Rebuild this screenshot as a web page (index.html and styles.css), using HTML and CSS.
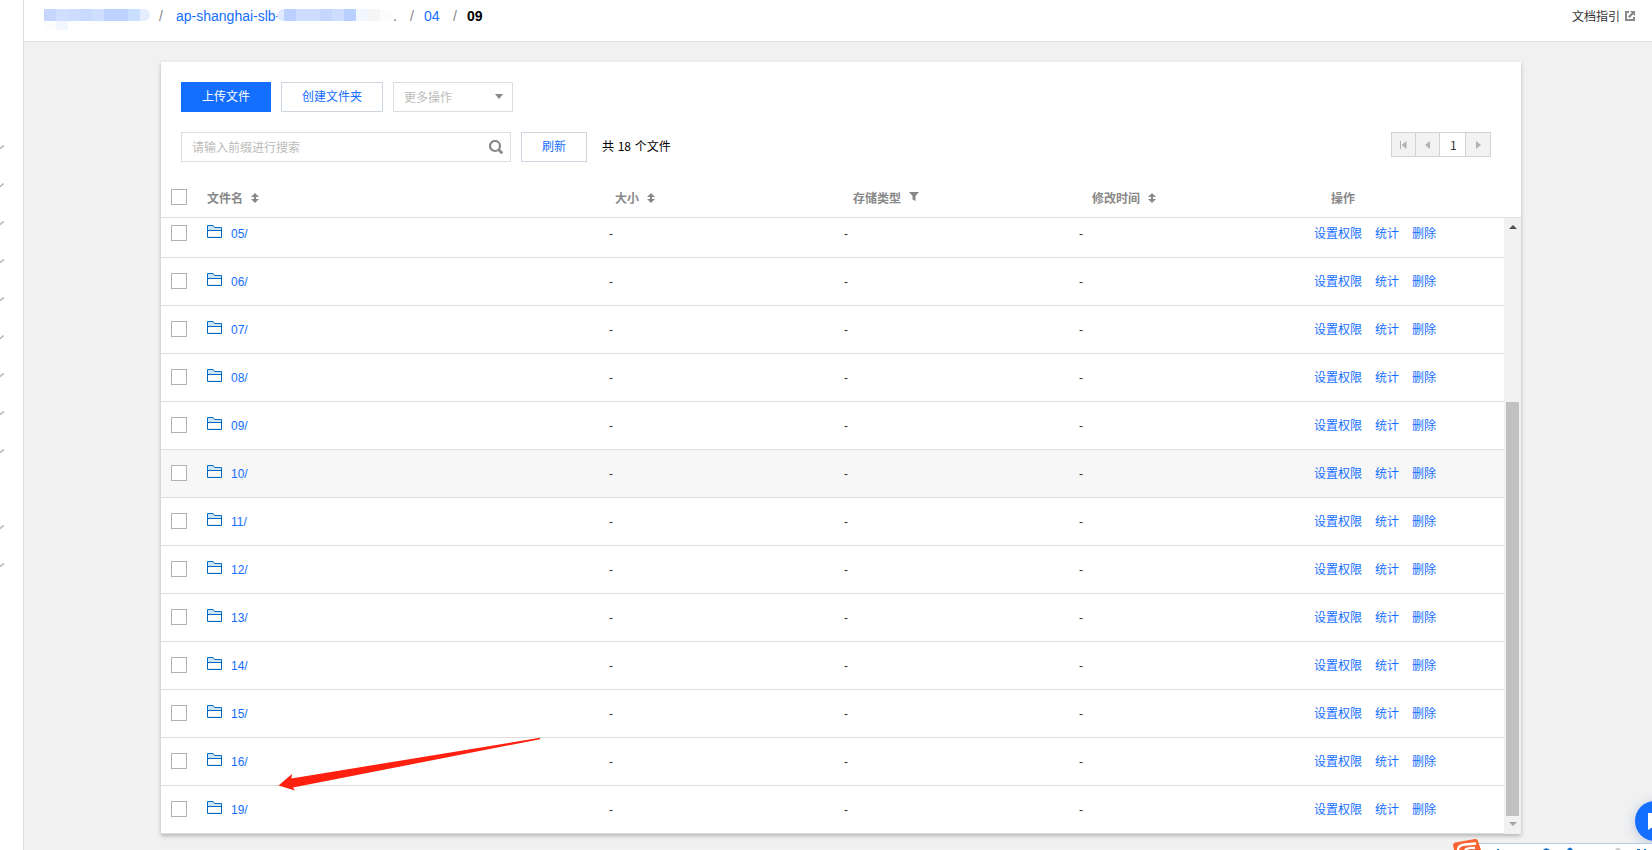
FILE: index.html
```html
<!DOCTYPE html>
<html lang="zh-CN">
<head>
    <meta charset="UTF-8">
    <meta name="viewport" content="width=device-width, initial-scale=1.0">
    <title>文件列表</title>
    <link rel="stylesheet" href="styles.css">
</head>
<body>
    <svg class="defs" width="0" height="0">
        <symbol id="folder" viewBox="0 0 15 13">
            <path d="M.5 5V.5h5.700l1.500 2h6.800V5z" fill="#cfe3f6"/>
            <path d="M1 11h13v1H1z" fill="#dcebf8"/>
            <path d="M.5 12.500V.5h5.700l1.500 2h6.800v10zM.5 5.500h14" fill="none" stroke="#006ac5"/>
        </symbol>
        <symbol id="sort" viewBox="0 0 8 10">
            <path d="M4 0l4 4H5v2h3l-4 4-4-4h3V4H0z" fill="#888"/>
        </symbol>
        <symbol id="chevron" viewBox="0 0 8 5">
            <path d="M0 .5l4 3 4-3" fill="none" stroke="#b4bbbb" stroke-width="1.500"/>
        </symbol>
    </svg>

    <div class="layout">
        <div class="sidebar" id="sidebar"></div>

        <div class="main">
            <div class="topbar">
                <div class="breadcrumb">
                    <span class="mosaic first"><i></i><i></i><i></i><i></i><i></i><i></i><i></i><i></i><i></i></span>
                    <span class="slash">/</span>
                    <a class="bucket">ap-shanghai-slb-</a>
                    <span class="mosaic second"><i></i><i></i><i></i><i></i><i></i><i></i><i></i><i></i><i></i><i></i></span>
                    <span class="dot">.</span>
                    <span class="slash">/</span>
                    <a class="dir">04</a>
                    <span class="slash">/</span>
                    <b>09</b>
                </div>
                <a class="doc-link">文档指引
                    <svg width="10" height="10" viewBox="0 0 10 10">
                        <path d="M4 1H1v8h8V6" fill="none" stroke="#888" stroke-width="2"/>
                        <path d="M5 0h5v5L8.300 3.300 4.600 7 3 5.400 6.700 1.700z" fill="#888"/>
                    </svg>
                </a>
            </div>

            <div class="panel">
                <div class="toolbar">
                    <button class="btn primary">上传文件</button>
                    <button class="btn create">创建文件夹</button>
                    <div class="select">更多操作<span class="caret"></span></div>
                </div>
                <div class="toolbar search-bar">
                    <div class="search"><span>请输入前缀进行搜索</span>
                        <svg width="14" height="14" viewBox="0 0 14 14">
                            <circle cx="6" cy="6" r="5" fill="none" stroke="#888" stroke-width="2.200"/>
                            <path d="M9.300 9.300l4 4" stroke="#888" stroke-width="2.800"/>
                        </svg>
                    </div>
                    <button class="btn refresh">刷新</button>
                    <span class="total">共 18 个文件</span>
                    <div class="pager">
                        <span><svg width="7" height="8" viewBox="0 0 7 8"><path d="M0 0h1v8H0zM6.500 0v8L1.500 4z" fill="#b2b2b2"/></svg></span>
                        <span><svg width="5" height="8" viewBox="0 0 5 8"><path d="M5 0v8L0 4z" fill="#b2b2b2"/></svg></span>
                        <span class="current">1</span>
                        <span><svg width="5" height="8" viewBox="0 0 5 8"><path d="M0 0v8l5-4z" fill="#b2b2b2"/></svg></span>
                    </div>
                </div>

                <div class="table-head">
                    <div class="cell-check"><span class="checkbox"></span></div>
                    <div>文件名<svg class="sort" width="8" height="10"><use href="#sort"/></svg></div>
                    <div>大小<svg class="sort" width="8" height="10"><use href="#sort"/></svg></div>
                    <div>存储类型<svg class="filter" width="10" height="9" viewBox="0 0 10 9"><path d="M0 0h10L6.500 4v5l-3-1.500V4z" fill="#888"/></svg></div>
                    <div>修改时间<svg class="sort" width="8" height="10"><use href="#sort"/></svg></div>
                    <div>操作</div>
                </div>
                <div class="table-body">
                    <div class="rows" id="rows"></div>
                    <div class="scrollbar">
                        <span class="scroll-up"></span>
                        <span class="thumb"></span>
                        <span class="scroll-down"></span>
                    </div>
                </div>
            </div>
        </div>
    </div>

    <svg class="arrow" width="264" height="56" viewBox="0 0 264 56">
        <path d="M.5 47.500L14 36l-.7 4.500L262 -.2V1.200L15 49.500l2 3z" fill="#ff2010"/>
    </svg>

    <div class="chat">
        <svg width="20" height="18" viewBox="0 0 20 18"><path d="M0 0h20v14H5l-5 3z" fill="#fff"/></svg>
    </div>

    <div class="ime">
        <svg width="199" height="12" viewBox="0 0 199 12">
            <path d="M26 5.500h173V12H26z" fill="#fff"/>
            <path d="M26 5.500h173" stroke="#b5c9e8"/>
            <path d="M0 7Q0 5 2 4.500L22 1q2.500-.3 3 2L28 12H1z" fill="#f96332"/>
            <path d="M5 12q0-5 7-5.500L23 5.500M12 12q2-2.500 10-2" fill="none" stroke="#fff" stroke-width="2.300"/>
            <path d="M44 11h2v1h-2zM90 12q3-3.500 7 0zM114 12q3-5 6 0zM184 11h3v1h-3zM191 11h2v1h-2z" fill="#1470c8"/>
            <path d="M162 12q3-5 6 0z" fill="#ccc"/>
        </svg>
    </div>

    <script>
        const dirs = ['05', '06', '07', '08', '09', '10', '11', '12', '13', '14', '15', '16', '19'];
        const rows = document.getElementById('rows');
        const sidebar = document.getElementById('sidebar');

        dirs.forEach(dir => {
            rows.innerHTML += `
                <div class="row${dir === '10' ? ' hover' : ''}">
                    <div class="cell-check"><span class="checkbox"></span></div>
                    <div class="name"><svg width="15" height="13"><use href="#folder"/></svg><a>${dir}/</a></div>
                    <div class="value">-</div>
                    <div class="value">-</div>
                    <div class="value">-</div>
                    <div class="actions"><a>设置权限</a><a>统计</a><a>删除</a></div>
                </div>`;
        });

        // one menu item has no submenu
        for (let i = 0; i < 12; i++) {
            sidebar.innerHTML += `<div class="menu-item">${i === 9 ? '' : '<svg width="8" height="5"><use href="#chevron"/></svg>'}</div>`;
        }
    </script>
</body>
</html>
```
FILE: styles.css
```css
* {
    box-sizing: border-box;
}
body {
    margin: 0;
    height: 100vh;
    overflow: hidden;
    position: relative;
    font-family: "Liberation Sans", "Noto Sans CJK SC", sans-serif;
    font-size: 12px;
    color: #000;
    background: #f1f1f1;
}
a {
    color: #146eff;
    text-decoration: none;
}
.defs {
    position: absolute;
}
.layout {
    display: flex;
    height: 100vh;
}
.sidebar {
    width: 24px;
    padding-top: 128px;
    background: #fff;
    border-right: 1px solid #ddd;
    overflow: hidden;
}
.menu-item {
    height: 38px;
    display: flex;
    align-items: center;
}
.menu-item svg {
    margin-left: -4px;
}
.main {
    flex: 1;
}
.topbar {
    height: 42px;
    display: flex;
    justify-content: space-between;
    padding: 0 17px 0 20px;
    background: #fff;
    border-bottom: 1px solid #ddd;
}
.breadcrumb {
    display: flex;
    height: 32px;
    line-height: 32px;
    font-size: 14px;
}
.breadcrumb .slash {
    color: #888;
    width: 4px;
    margin: 0 13px 0 9px;
}
.breadcrumb .bucket {
    width: 101px;
    white-space: nowrap;
}
.breadcrumb .dot {
    width: 7px;
    margin-left: -1px;
    margin-right: 1px;
    color: #666;
}
.breadcrumb .dir {
    width: 20px;
}
.breadcrumb .dot + .slash {
    margin-right: 10px;
}
.breadcrumb .dir + .slash {
    margin-right: 10px;
}
.mosaic {
    display: flex;
    height: 12px;
    margin-top: 9px;
}
.mosaic i {
    width: 12px;
    height: 12px;
    flex: none;
    background: #cddcff;
}
.mosaic.first {
    width: 106px;
}
.mosaic.second {
    width: 117px;
    overflow: hidden;
    border-radius: 6px;
}
.mosaic.first i:nth-child(1) { background: #c6d6ff; box-shadow: 0 9px 0 #fcfdff; }
.mosaic.first i:nth-child(2) { background: #d1dfff; box-shadow: 0 9px 0 #f3f7ff; }
.mosaic.first i:nth-child(4) { background: #c8daff; }
.mosaic.first i:nth-child(5) { background: #d0dfff; }
.mosaic.first i:nth-child(6), .mosaic.first i:nth-child(7) { background: #bfd2ff; }
.mosaic.first i:nth-child(8) { background: #cadfff; }
.mosaic.first i:nth-child(9) { width: 10px; background: #e5edff; border-radius: 0 6px 6px 0; }
.mosaic.second i:nth-child(1) { width: 7px; background: #dfe9ff; }
.mosaic.second i:nth-child(2) { background: #bbd0ff; }
.mosaic.second i:nth-child(5) { background: #c5d6ff; }
.mosaic.second i:nth-child(7) { background: #b8cfff; }
.mosaic.second i:nth-child(8) { background: #f2f7ff; }
.mosaic.second i:nth-child(9) { background: #f5f5f5; }
.mosaic.second i:nth-child(10) { background: #fcfcfc; }
.doc-link {
    display: flex;
    align-items: center;
    gap: 5px;
    height: 31px;
    color: #333;
}
.doc-link svg {
    margin-top: 1px;
}

.panel {
    width: 1360px;
    height: 772px;
    margin: 20px 0 0 137px;
    background: #fff;
    box-shadow: 0 2px 4px rgba(0, 0, 0, 0.25);
}
.toolbar {
    display: flex;
    padding: 20px 30px 0 20px;
}
.btn {
    height: 30px;
    padding: 0 0 3px;
    margin-right: 10px;
    border: 1px solid #cfd5de;
    background: #fff;
    color: #146eff;
    font-family: inherit;
    font-size: 12px;
}
.btn.primary {
    width: 90px;
    border-color: #146eff;
    background: #146eff;
    color: #fff;
}
.btn.create {
    width: 102px;
}
.btn.refresh {
    width: 66px;
}
.select {
    width: 120px;
    height: 30px;
    padding: 0 9px 1px 10px;
    border: 1px solid #ddd;
    display: flex;
    align-items: center;
    justify-content: space-between;
    color: #bbb;
}
.caret {
    border: 4px solid transparent;
    border-top: 5px solid #888;
    border-bottom: 0;
}
.search {
    width: 330px;
    height: 30px;
    padding: 0 7px 0 10px;
    margin-right: 10px;
    border: 1px solid #ddd;
    display: flex;
    align-items: center;
    justify-content: space-between;
    color: #bbb;
}
.search span {
    margin-top: -2px;
}
.total {
    line-height: 27px;
    margin-left: 5px;
    font-family: "Noto Sans CJK SC", sans-serif;
    word-spacing: 1px;
}
.pager {
    display: flex;
    width: 100px;
    height: 25px;
    margin-left: auto;
    border: 1px solid #d1d2d3;
}
.pager span {
    width: 24px;
    display: flex;
    align-items: center;
    justify-content: center;
    background: #f2f2f2;
    border-right: 1px solid #d1d2d3;
}
.pager span:last-child {
    border-right: 0;
}
.pager .current {
    width: 27px;
    padding: 0 0 1px 2px;
    background: #fff;
    color: #333;
    font-family: "Noto Sans CJK SC", sans-serif;
}

.table-head {
    position: relative;
    z-index: 1;
    display: grid;
    grid-template-columns: 46px 408px 238px 239px 239px 1fr;
    align-items: center;
    height: 56px;
    padding-top: 15px;
    border-bottom: 1px solid #ddd;
    font-weight: bold;
    color: #888;
}
.table-head > div {
    display: flex;
    align-items: center;
}
.sort {
    margin: 1px 0 0 8px;
}
.filter {
    margin: -2px 0 0 8px;
}
.cell-check {
    padding-left: 10px;
}
.checkbox {
    display: block;
    width: 16px;
    height: 16px;
    border: 1px solid #b2b2b2;
    background: #fff;
}
.table-body {
    position: relative;
    z-index: 0;
    display: flex;
    height: 616px;
    overflow: hidden;
}
/* list is scrolled, the first row is cut at the top */
.rows {
    flex: 1;
    margin-top: -8px;
}
.row {
    display: grid;
    grid-template-columns: 46px 402px 235px 235px 235px 1fr;
    align-items: center;
    height: 48px;
    padding-bottom: 1px;
    border-bottom: 1px solid #ddd;
    color: #333;
    background: #fff;
}
.row.hover {
    background: #f7f7f7;
}
.value {
    padding-top: 2px;
}
.name {
    display: flex;
    align-items: center;
    gap: 9px;
}
.name a {
    padding-top: 2px;
}
.name svg {
    margin-top: -3px;
}
.actions {
    display: flex;
    gap: 13px;
    padding-bottom: 1px;
}
.scrollbar {
    width: 17px;
    padding: 7px 2px;
    display: flex;
    flex-direction: column;
    align-items: center;
    background: #f1f1f1;
}
.scroll-up {
    border: 4px solid transparent;
    border-bottom-color: #505050;
    border-top: 0;
}
.thumb {
    width: 13px;
    height: 414px;
    margin-top: 173px;
    background: #c1c1c1;
}
.scroll-down {
    margin-top: 6px;
    border: 4px solid transparent;
    border-top-color: #a3a3a3;
    border-bottom: 0;
}

.arrow {
    position: absolute;
    left: 278px;
    top: 738px;
    overflow: visible;
}
.chat {
    position: absolute;
    left: 1635px;
    top: 801px;
    width: 40px;
    height: 40px;
    padding: 12px 0 0 13px;
    border-radius: 50%;
    background: #146eff;
    box-shadow: 0 2px 12px rgba(55, 99, 170, 0.3);
}
.ime {
    position: absolute;
    left: 1453px;
    top: 838px;
}
.ime svg {
    display: block;
}
```
